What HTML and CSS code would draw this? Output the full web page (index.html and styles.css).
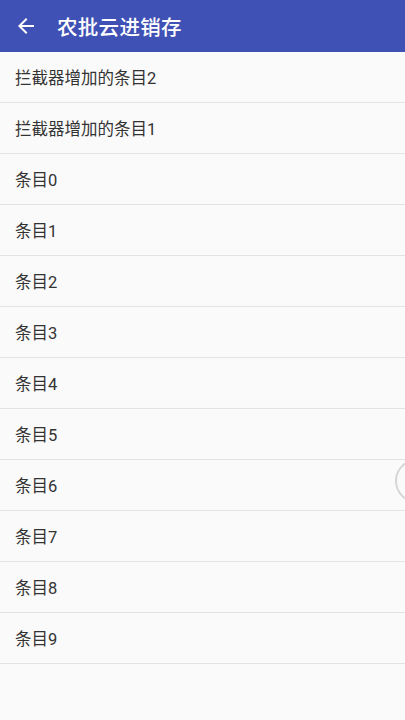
FILE: index.html
```html
<!DOCTYPE html>
<html lang="zh">
<head>
<meta charset="utf-8">
<link rel="stylesheet" href="styles.css">
</head>
<body>
<div class="screen">
<header class="appbar">
  <svg class="back" width="24" height="24" viewBox="0 0 24 24"><path d="M20 11H7.83l5.59-5.59L12 4l-8 8 8 8 1.41-1.41L7.83 13H20v-2z" fill="#fff"/></svg>
  <div class="title">农批云进销存</div>
</header>
<ul class="list">
  <li>拦截器增加的条目2</li>
  <li>拦截器增加的条目1</li>
  <li>条目0</li>
  <li>条目1</li>
  <li>条目2</li>
  <li>条目3</li>
  <li>条目4</li>
  <li>条目5</li>
  <li>条目6</li>
  <li>条目7</li>
  <li>条目8</li>
  <li>条目9</li>
</ul>
<div class="edge-handle"></div>
</div>
</body>
</html>
```
FILE: styles.css
```css
html, body {
  margin: 0;
  padding: 0;
  background: #fafafa;
  font-family: Roboto, "Noto Sans CJK SC", sans-serif;
  overflow: hidden;
}
.screen {
  position: relative;
  width: 405px;
  height: 720px;
  overflow: hidden;
}
.appbar {
  height: 52px;
  background: #3f51b5;
  display: flex;
  align-items: center;
  padding-left: 14px;
  box-sizing: border-box;
}
.back {
  flex: none;
}
.title {
  color: #fff;
  font-size: 20.5px;
  font-weight: 500;
  margin-left: 19px;
  letter-spacing: 0.3px;
}
.list {
  list-style: none;
  margin: 0;
  padding: 0;
}
.list li {
  height: 50px;
  border-bottom: 1px solid #e3e3e3;
  display: flex;
  align-items: center;
  padding-left: 15px;
  font-size: 16.5px;
  color: #333;
}
.edge-handle {
  position: absolute;
  left: 395px;
  top: 459px;
  width: 44px;
  height: 44px;
  border-radius: 50%;
  border: 2px solid #d6d6d6;
  box-sizing: border-box;
  background: #fafafa;
}
```
